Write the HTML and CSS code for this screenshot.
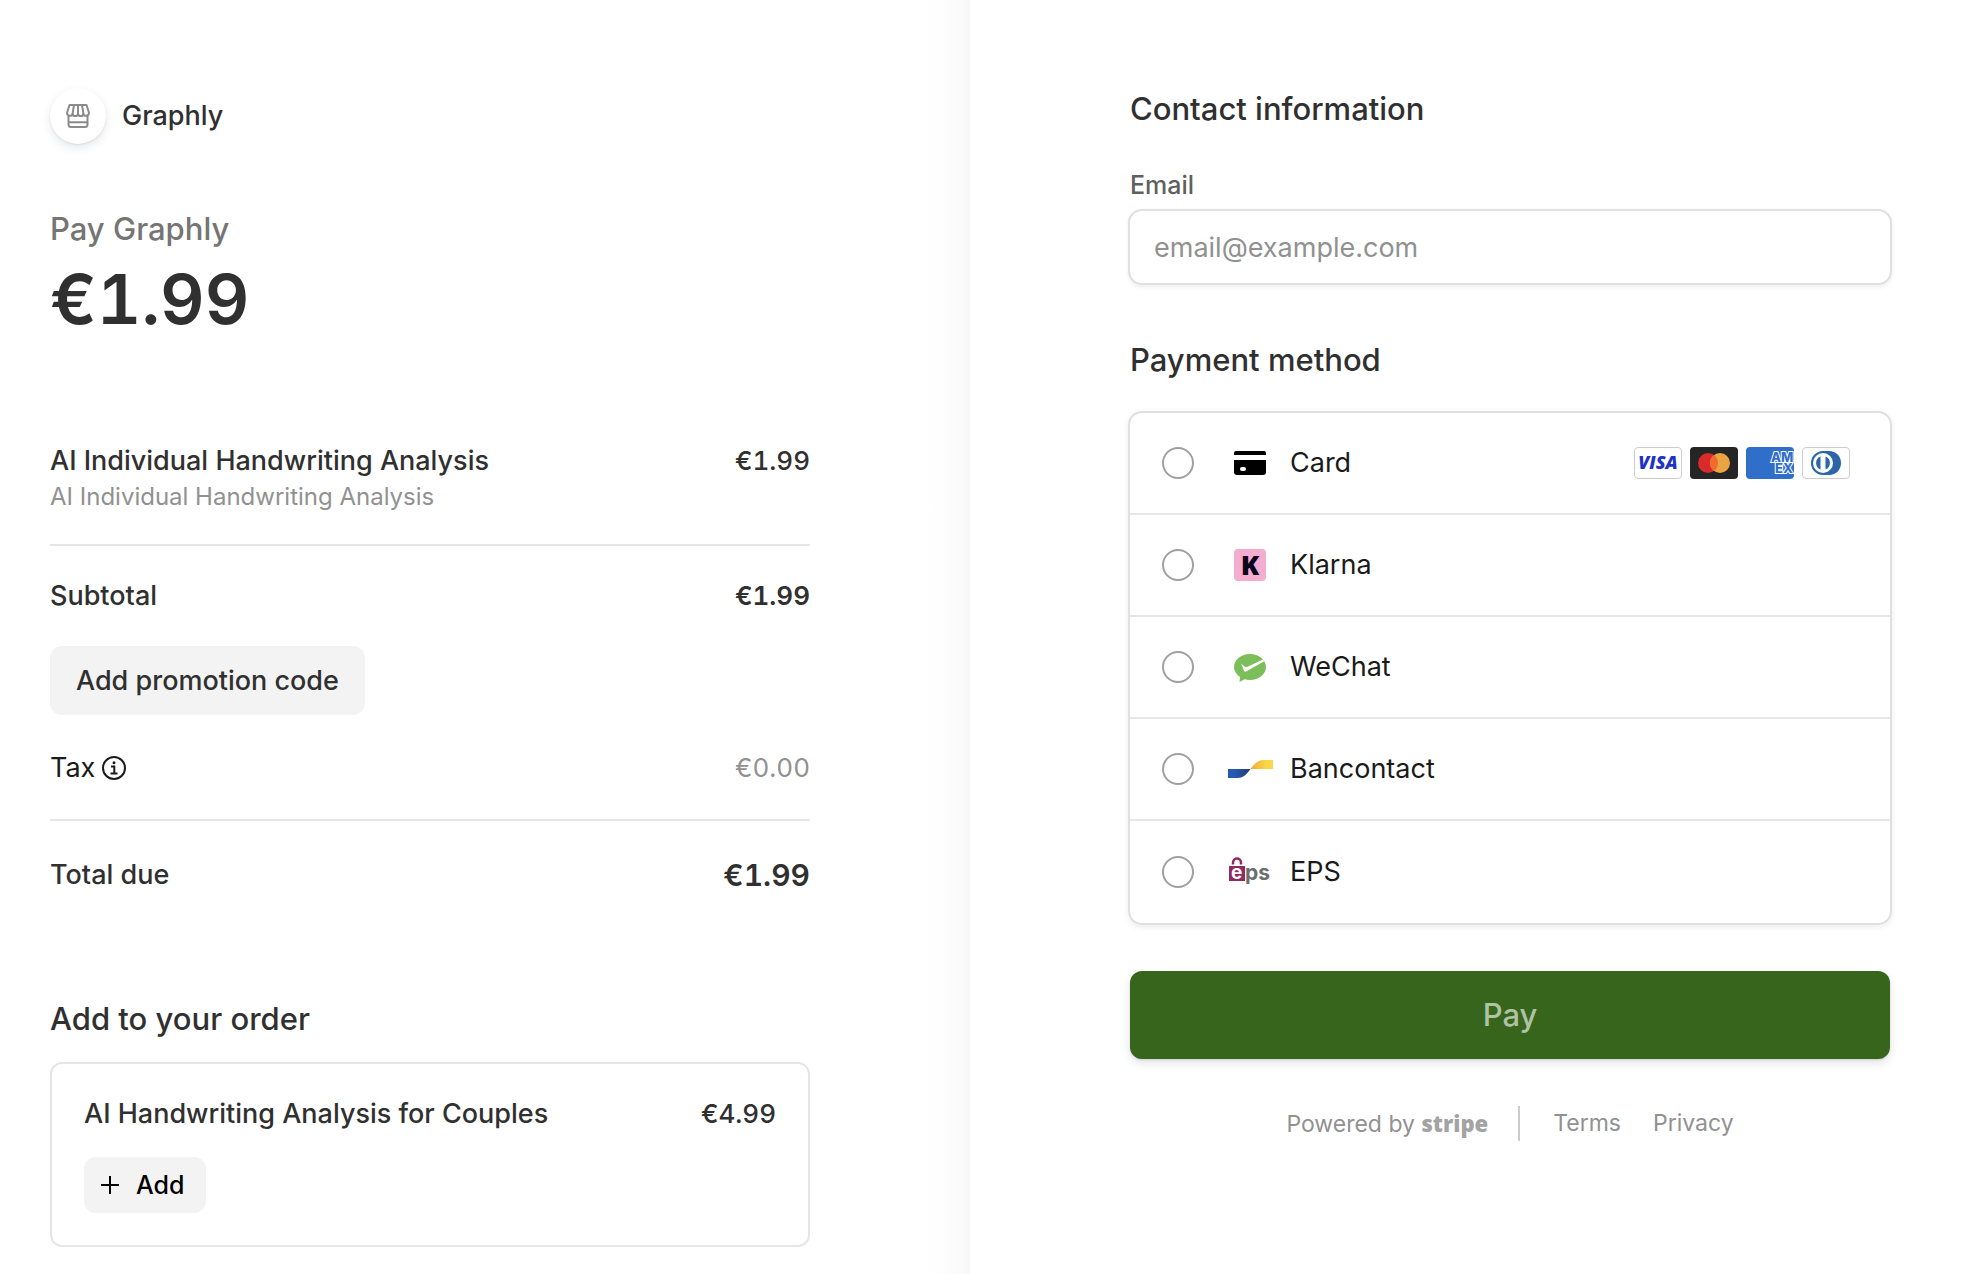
FILE: index.html
```html
<!DOCTYPE html>
<html lang="en">
<head>
<meta charset="utf-8">
<meta name="viewport" content="width=device-width, initial-scale=1">
<title>Graphly checkout</title>
<link rel="stylesheet" href="styles.css">
</head>
<body>
<div class="checkout">
  <section class="summary">
    <header class="merchant">
      <span class="merchant-badge">
        <svg width="24" height="24" viewBox="0 0 24 24" fill="none" stroke="#8b8b8b" stroke-width="2" stroke-linejoin="round">
          <path d="M3.500 1h17l2.400 7.500c.3 3.800-4.700 4.500-5.500 1.200-.6 3.200-4.800 3.200-5.400 0-.6 3.200-4.800 3.200-5.400 0C5.800 13 .8 12.300 1.100 8.500z"/>
          <path d="M8 1 6.600 9.700M16 1l1.400 8.700M12 1v8.700M2.500 12v8.500c0 1.500 1 2.500 2.500 2.500h14c1.500 0 2.500-1 2.500-2.500V12M2.500 18.200h19"/>
        </svg>
      </span>
      <span class="merchant-name">Graphly</span>
    </header>

    <h1 class="pay-to">Pay Graphly</h1>
    <p class="amount">€1.99</p>

    <div class="line item">
      <div>
        <p class="item-name">AI Individual Handwriting Analysis</p>
        <p class="item-note">AI Individual Handwriting Analysis</p>
      </div>
      <span class="price">€1.99</span>
    </div>

    <div class="line subtotal">
      <span>Subtotal</span>
      <span class="price strong">€1.99</span>
    </div>
    <button class="promo" type="button">Add promotion code</button>
    <div class="line tax">
      <span class="tax-label">Tax
        <svg width="24" height="24" viewBox="0 0 24 24" fill="none" stroke="#1a1a1a" stroke-width="2">
          <circle cx="12" cy="12" r="11"/>
          <path d="M9 10.500h3.300V17M8.500 17.500h7"/>
          <circle cx="12" cy="6.700" r="1.500" fill="#1a1a1a" stroke="none"/>
        </svg>
      </span>
      <span class="price muted">€0.00</span>
    </div>
    <div class="line total">
      <span>Total due</span>
      <span class="price total-amount">€1.99</span>
    </div>

    <h2 class="section-title">Add to your order</h2>
    <div class="upsell">
      <div class="line">
        <span>AI Handwriting Analysis for Couples</span>
        <span class="price">€4.99</span>
      </div>
      <button class="add" type="button">
        <svg width="20" height="20" viewBox="0 0 20 20" stroke="#000" stroke-width="2"><path d="M1 10h18M10 1v18"/></svg>
        Add
      </button>
    </div>
  </section>

  <form class="payment">
    <h2 class="section-title">Contact information</h2>
    <label class="field-label" for="email">Email</label>
    <input class="email" id="email" type="email" placeholder="email@example.com">

    <h2 class="section-title method-title">Payment method</h2>
    <div class="methods">
      <label class="method">
        <input class="radio" type="radio" name="method">
        <span class="method-icon">
          <svg width="32" height="24" viewBox="0 0 32 24"><path d="M2 0h28a2 2 0 0 1 2 2v2H0V2a2 2 0 0 1 2-2zM0 9h32v12a3 3 0 0 1-3 3H3a3 3 0 0 1-3-3z"/><rect x="6" y="16" width="6" height="4" rx="2" fill="#fff"/></svg>
        </span>
        <span>Card</span>
        <span class="brands">
          <svg width="48" height="32" viewBox="0 0 48 32"><rect x=".5" y=".5" width="47" height="31" rx="3.500" fill="#fff" stroke="#ccc"/><text class="visa" x="24" y="22" text-anchor="middle">VISA</text></svg>
          <svg width="48" height="32" viewBox="0 0 48 32"><rect width="48" height="32" rx="4" fill="#252525"/><circle cx="18" cy="16" r="10" fill="#d92b2b"/><circle cx="30" cy="16" r="10" fill="#eba442"/><path d="M24 8a10 10 0 0 1 0 16 10 10 0 0 1 0-16z" fill="#ef6c2e"/></svg>
          <svg width="48" height="32" viewBox="0 0 48 32"><rect width="48" height="32" rx="4" fill="#306fc9"/><text class="amex"><tspan x="25" y="15">AM</tspan><tspan x="29" y="26">EX</tspan></text></svg>
          <svg width="48" height="32" viewBox="0 0 48 32"><rect x=".5" y=".5" width="47" height="31" rx="3.500" fill="#fff" stroke="#ccc"/><path d="M21 4h6c7 0 12 5 12 12s-5 12-12 12h-6z" fill="#2b66a9"/><circle cx="21" cy="16" r="12" fill="#2b66a9"/><circle cx="21" cy="16" r="10" fill="#fff"/><path d="M18.500 9.500a7 7 0 0 0 0 13zM23.500 9.500a7 7 0 0 1 0 13z" fill="#2b66a9"/></svg>
        </span>
      </label>
      <label class="method">
        <input class="radio" type="radio" name="method">
        <span class="method-icon">
          <span class="klarna">K</span>
        </span>
        <span>Klarna</span>
      </label>
      <label class="method">
        <input class="radio" type="radio" name="method">
        <span class="method-icon">
          <svg width="32" height="32" viewBox="0 0 32 32"><path d="M16 3c8.800 0 16 5.800 16 13s-7.200 13-16 13c-1.900 0-3.700-.3-5.400-.8L5.500 31l.5-5C2.300 23.600 0 20 0 16 0 8.800 7.200 3 16 3z" fill="#7cbf5a"/><path d="M7 12.500l4.300 3.500c.5.300 1 .3 1.600.1L29 8.500l1.300 1.800L12 20.500c-.8.400-1.500.2-1.900-.6z" fill="#fff"/></svg>
        </span>
        <span>WeChat</span>
      </label>
      <label class="method">
        <input class="radio" type="radio" name="method">
        <span class="method-icon">
          <svg width="45" height="18" viewBox="0 0 45 18">
            <defs>
              <linearGradient id="bc-blue"><stop offset=".3" stop-color="#2559b3"/><stop offset="1" stop-color="#253a68"/></linearGradient>
              <linearGradient id="bc-gold"><stop offset="0" stop-color="#f0a93a"/><stop offset=".7" stop-color="#f9d749"/></linearGradient>
            </defs>
            <path d="M0 9h22.500C19 13.500 16 18 9.500 18H0z" fill="url(#bc-blue)"/>
            <path d="M45 9H22.500C26 4.500 29 0 35.500 0H45z" fill="url(#bc-gold)"/>
          </svg>
        </span>
        <span>Bancontact</span>
      </label>
      <label class="method">
        <input class="radio" type="radio" name="method">
        <span class="method-icon">
          <svg width="42" height="32" viewBox="0 0 42 32"><path d="M4 8.500V7C4 1 12 1 12 7v1.500" fill="none" stroke="#8f2a64" stroke-width="2.500"/><path d="M0 10h16v15H0z" fill="#8f2a64"/><text class="eps-e" x="2" y="23">e</text><text class="eps-ps" x="16" y="24">ps</text></svg>
        </span>
        <span>EPS</span>
      </label>
    </div>

    <button class="pay" type="submit">Pay</button>

    <footer class="footer">
      <a class="powered" href="#">Powered by <strong class="stripe">stripe</strong></a>
      <nav class="legal">
        <a href="#">Terms</a>
        <a href="#">Privacy</a>
      </nav>
    </footer>
  </form>
</div>
</body>
</html>
```
FILE: styles.css
```css
body {
  margin: 0;
  background: #fff;
  color: #303030;
  font-family: Inter, "Liberation Sans", sans-serif;
  font-size: 27px;
  font-weight: 500;
  line-height: 36px;
}

h1, h2, p { margin: 0; }
button, input { font: inherit; color: inherit; }
button { border: 0; cursor: pointer; }
a { color: inherit; text-decoration: none; }
svg { display: block; flex: none; }

.checkout { display: flex; min-height: 100vh; }

.summary {
  flex: 1 1 0;
  padding: 88px 160px 26px 50px;
  background: linear-gradient(to left, #f7f7f7, #fafafa 8px, #fdfdfd 24px, #fff 44px);
}

.payment { flex: 1 1 0; padding: 88px 98px 40px 160px; }

.merchant { display: flex; align-items: center; gap: 16px; }
.merchant-badge {
  display: grid;
  place-items: center;
  width: 56px;
  height: 56px;
  border-radius: 50%;
  background: #fff;
  box-shadow: 0 4px 10px rgba(60, 66, 87, .12), 0 1px 2px rgba(0, 0, 0, .08);
}

.pay-to {
  margin-top: 64px;
  color: #757575;
  font-size: 31px;
  font-weight: 500;
  line-height: 42px;
}
.amount {
  margin-top: 4px;
  font-size: 69px;
  font-weight: 600;
  line-height: 90px;
}
.amount, .price { font-variant-numeric: tabular-nums; }
.price { font-size: 26px; }

.line { display: flex; justify-content: space-between; gap: 24px; }
.item {
  margin-top: 99px;
  padding-bottom: 29px;
  border-bottom: 2px solid #e6e6e6;
}
.item-note {
  color: #919191;
  font-size: 24px;
  font-weight: 400;
}
.subtotal { padding-top: 32px; }
.strong { font-weight: 600; }
.promo {
  height: 69px;
  margin-top: 32px;
  padding: 0 26px;
  border-radius: 12px;
  background: #f3f3f3;
}
.tax {
  margin-top: 35px;
  padding-bottom: 33px;
  border-bottom: 2px solid #e6e6e6;
  font-weight: 400;
}
.tax-label { display: flex; align-items: center; gap: 7px; color: #1a1a1a; }
.muted { color: #919191; }
.total { margin-top: 36px; }
.price.total-amount { font-size: 30px; font-weight: 600; }

.section-title { font-size: 31px; font-weight: 500; line-height: 42px; }
.summary .section-title { margin-top: 105px; }

.upsell {
  margin-top: 22px;
  padding: 32px;
  border: 2px solid #e6e6e6;
  border-radius: 12px;
}
.add {
  display: flex;
  align-items: center;
  gap: 16px;
  height: 56px;
  margin-top: 25px;
  padding: 0 22px 0 16px;
  border-radius: 12px;
  background: #f3f3f3;
  color: #000;
  font-size: 25px;
}

.field-label {
  display: block;
  margin-top: 37px;
  color: #5f5f5f;
  font-size: 25px;
}
.email {
  box-sizing: border-box;
  display: block;
  width: calc(100% + 4px);
  height: 76px;
  margin: 6px -2px 0;
  padding: 0 24px;
  border: 2px solid #e0e0e0;
  border-radius: 14px;
  background: #fff;
  box-shadow: 0 2px 4px rgba(0, 0, 0, .07);
  font-weight: 400;
}
.email::placeholder { color: #919191; opacity: 1; }
.method-title { margin-top: 54px; }

.methods {
  box-sizing: border-box;
  display: grid;
  grid-auto-rows: 1fr;
  min-height: 514px;
  margin: 30px -2px 0;
  border: 2px solid #e0e0e0;
  border-radius: 14px;
  box-shadow: 0 2px 6px rgba(0, 0, 0, .08);
}
.method {
  display: flex;
  align-items: center;
  padding: 0 40px 0 32px;
  color: #1a1a1a;
  font-weight: 400;
}
.method:not(:last-child) { border-bottom: 2px solid #e6e6e6; }
.radio {
  appearance: none;
  box-sizing: border-box;
  width: 32px;
  height: 32px;
  margin: 0;
  border: 2px solid #a0a0a0;
  border-radius: 50%;
}
.radio:checked { border: 10px solid #36651b; }
.method-icon { display: grid; place-items: center; width: 48px; margin: 0 16px 0 32px; }
.brands { display: flex; gap: 8px; margin-left: auto; }

.visa { font: italic 800 18px "Open Sans", sans-serif; fill: #1e34c4; }
.amex { font: 800 13px Inter, sans-serif; fill: #306fc9; stroke: #fff; stroke-width: 2px; paint-order: stroke; }
.klarna {
  width: 32px;
  border-radius: 4px;
  background: #f4accf;
  color: #0b051d;
  font: 800 27px/32px "Open Sans", sans-serif;
  text-align: center;
}
.eps-e { font: 700 19px Inter, sans-serif; fill: #fff; }
.eps-ps { font: 700 21px Inter, sans-serif; fill: #6d6e6e; }

.pay {
  width: 100%;
  height: 88px;
  margin-top: 46px;
  border-radius: 12px;
  background: #36651b;
  box-shadow: 0 4px 10px rgba(60, 66, 87, .14), 0 1px 2px rgba(0, 0, 0, .12);
  color: #afc2a4;
  font-size: 31px;
}

.footer {
  display: flex;
  justify-content: center;
  margin-top: 47px;
  color: #919191;
  font-size: 23px;
  font-weight: 400;
  line-height: 34px;
}
.powered { padding-right: 30px; border-right: 2px solid #ccc; }
.stripe { color: #a3a3a3; font-family: "Open Sans", sans-serif; font-size: 22px; font-weight: 800; }
.legal { display: flex; gap: 32px; padding-left: 33px; }
```
